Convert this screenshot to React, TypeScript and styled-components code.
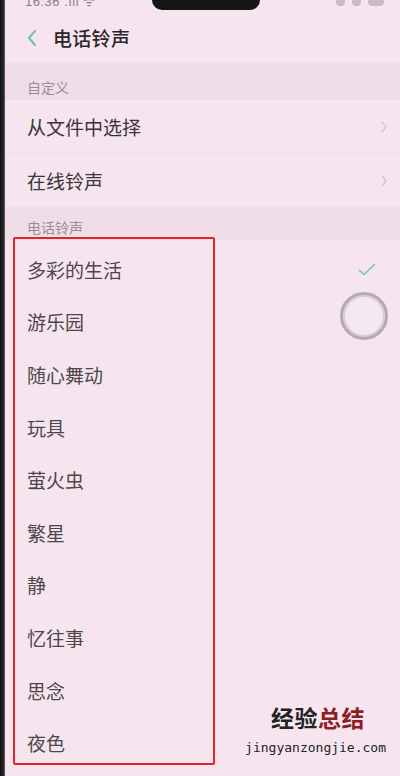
import React from "react";
import styled, { createGlobalStyle } from "styled-components";

const GlobalStyle = createGlobalStyle`
  html, body {
    margin: 0;
    padding: 0;
    background: #f6e5ef;
  }
  body {
    font-family: "Noto Sans CJK SC", "Noto Sans", sans-serif;
  }
`;

const ringtones = [
  "多彩的生活",
  "游乐园",
  "随心舞动",
  "玩具",
  "萤火虫",
  "繁星",
  "静",
  "忆往事",
  "思念",
  "夜色",
];

const Frame = styled.div`
  display: flex;
  width: 400px;
  height: 776px;
  overflow: hidden;
`;

const Bezel = styled.div`
  width: 5px;
  flex-shrink: 0;
  background: linear-gradient(90deg, #111 0%, #2a2a2a 70%, #6b5f66 100%);
`;

const Screen = styled.div`
  position: relative;
  flex: 1;
  display: flex;
  flex-direction: column;
  background: #f6e5ef;
`;

const StatusBar = styled.div`
  height: 12px;
  display: flex;
  align-items: flex-start;
  overflow: hidden;
`;

const StatusLeft = styled.div`
  width: 147px;
  padding-left: 20px;
  box-sizing: border-box;
  margin-top: -6px;
  font-family: "Liberation Sans", sans-serif;
  font-size: 13px;
  line-height: 15px;
  color: #8a8088;
  letter-spacing: 0.5px;
`;

const Notch = styled.div`
  width: 108px;
  height: 10px;
  background: #151515;
  border-radius: 0 0 14px 14px;
`;

const StatusRight = styled.div`
  flex: 1;
  display: flex;
  justify-content: flex-end;
  align-items: center;
  gap: 7px;
  padding-right: 16px;
  margin-top: -2px;
`;

const Dot = styled.span<{ $w?: number }>`
  display: inline-block;
  width: ${(p) => p.$w ?? 9}px;
  height: 8px;
  border-radius: 4px;
  background: #c9bcc8;
`;

const Header = styled.div`
  height: 51px;
  display: flex;
  align-items: center;
  padding-left: 22px;
  gap: 16px;
`;

const Title = styled.h1`
  margin: 0;
  font-size: 19px;
  font-weight: 500;
  color: #2b2629;
  letter-spacing: 0.3px;
`;

const SectionHead = styled.div<{ $h: number }>`
  height: ${(p) => p.$h}px;
  display: flex;
  align-items: flex-end;
  padding: 0 0 3px 22px;
  box-sizing: border-box;
  background: #f0dde8;
  font-size: 14px;
  color: #9a8f97;
`;

const Row = styled.div`
  height: 54px;
  display: flex;
  align-items: center;
  justify-content: space-between;
  padding: 0 13px 0 22px;
  border-bottom: 1px solid rgba(120, 90, 110, 0.05);
  box-sizing: border-box;
  font-size: 19px;
  color: #3a3438;
`;

const ListWrap = styled.div`
  position: relative;
  padding-top: 3px;
`;

const Item = styled.div`
  height: 52.6px;
  display: flex;
  align-items: center;
  justify-content: space-between;
  padding: 0 24px 0 22px;
  font-size: 19px;
  color: #4d474b;
`;

const Highlight = styled.div`
  position: absolute;
  left: 8px;
  top: -3px;
  width: 198px;
  height: 524px;
  border: 2px solid #e3232a;
  border-radius: 2px;
  pointer-events: none;
`;

const FloatBall = styled.div`
  position: absolute;
  left: 335px;
  top: 292px;
  width: 42px;
  height: 42px;
  border-radius: 50%;
  border: 3px solid #b7a9b4;
  box-shadow: inset 0 0 0 2px #dccbd7;
  background: #f5e9f1;
`;

const Watermark = styled.div`
  position: absolute;
  right: 14px;
  bottom: 22px;
  display: flex;
  flex-direction: column;
  align-items: flex-end;
  gap: 12px;
`;

const MarkTitle = styled.div`
  font-size: 23px;
  font-weight: 700;
  letter-spacing: 0.5px;
  margin-right: 21px;
  color: #222;
  line-height: 1;
`;

const MarkRed = styled.span`
  color: #8f1c22;
`;

const MarkUrl = styled.div`
  font-family: "DejaVu Sans Mono", monospace;
  font-size: 13px;
  color: #222;
  line-height: 1;
`;

const Chevron = () => (
  <svg width="6" height="12" viewBox="0 0 6 12">
    <path d="M1 1 L5 6 L1 11" fill="none" stroke="#c9bcc5" strokeWidth="1.2" />
  </svg>
);

const BackArrow = () => (
  <svg width="10" height="18" viewBox="0 0 10 18">
    <path d="M8 2 L2 9 L8 16" fill="none" stroke="#6ec3a2" strokeWidth="2" strokeLinecap="round" />
  </svg>
);

const Check = () => (
  <svg width="18" height="13" viewBox="0 0 18 13">
    <path d="M1 7 L6 11.5 L17 1" fill="none" stroke="#7cc7a6" strokeWidth="1.6" />
  </svg>
);

const App = () => {
  return (
    <>
      <GlobalStyle />
      <Frame>
        <Bezel />
        <Screen>
          <StatusBar>
            <StatusLeft>16:36 .ıll ᯤ</StatusLeft>
            <Notch />
            <StatusRight>
              <Dot />
              <Dot />
              <Dot $w={16} />
            </StatusRight>
          </StatusBar>
          <Header>
            <BackArrow />
            <Title>电话铃声</Title>
          </Header>
          <SectionHead $h={37}>自定义</SectionHead>
          <Row>
            从文件中选择
            <Chevron />
          </Row>
          <Row>
            在线铃声
            <Chevron />
          </Row>
          <SectionHead $h={32}>电话铃声</SectionHead>
          <ListWrap>
            {ringtones.map((name, i) => (
              <Item key={name}>
                {name}
                {i === 0 && <Check />}
              </Item>
            ))}
            <Highlight />
          </ListWrap>
          <FloatBall />
          <Watermark>
            <MarkTitle>
              经验<MarkRed>总结</MarkRed>
            </MarkTitle>
            <MarkUrl>jingyanzongjie.com</MarkUrl>
          </Watermark>
        </Screen>
      </Frame>
    </>
  );
};

export default App;
